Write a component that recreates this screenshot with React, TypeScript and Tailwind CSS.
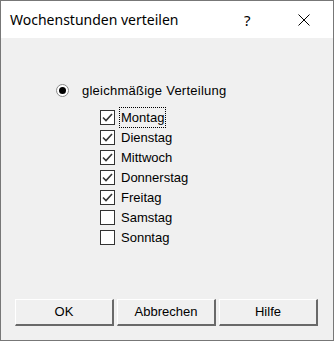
import React from "react";

const days = [
  { label: "Montag", checked: true, focus: true },
  { label: "Dienstag", checked: true },
  { label: "Mittwoch", checked: true },
  { label: "Donnerstag", checked: true },
  { label: "Freitag", checked: true },
  { label: "Samstag", checked: false },
  { label: "Sonntag", checked: false },
];

function CheckBox({ checked }: { checked: boolean }) {
  return (
    <div className="w-[15px] h-[15px] border border-[#333333] bg-white flex items-center justify-center shrink-0">
      {checked && (
        <svg width="13" height="13" viewBox="0 0 13 13">
          <path d="M2 6.5 L5 9.5 L11 3" fill="none" stroke="#333333" strokeWidth="1.6" />
        </svg>
      )}
    </div>
  );
}

function Btn({ children }: { children: React.ReactNode }) {
  return (
    <div className="w-[99px] h-[27px] bg-[#f0f0f0] border-t border-l border-t-white border-l-white border-b-2 border-r-2 border-b-[#696969] border-r-[#696969] flex items-center justify-center text-[13px] text-black">
      {children}
    </div>
  );
}

export default function App() {
  return (
    <div
      className="w-[334px] h-[341px] border border-[#777777] bg-[#f0f0f0] flex flex-col"
      style={{ fontFamily: '"Liberation Sans", Arial, sans-serif' }}
    >
      <div className="h-[37px] bg-white flex items-center shrink-0 relative">
        <div
          className="pl-[9px] text-[14px] text-black"
          style={{ fontFamily: '"Noto Sans", "Open Sans", sans-serif' }}
        >
          Wochenstunden verteilen
        </div>
        <div
          className="absolute left-[243px] top-[8px] text-[15px] text-black"
          style={{ fontFamily: '"Noto Sans", sans-serif' }}
        >
          ?
        </div>
        <svg className="absolute left-[297px] top-[13px]" width="12" height="12" viewBox="0 0 12 12">
          <path d="M0.5 0.5 L11.5 11.5 M11.5 0.5 L0.5 11.5" stroke="#000" strokeWidth="1" />
        </svg>
      </div>
      <div className="flex-1 flex flex-col">
        <div className="pt-[45px] pl-[55px] flex items-center gap-[13px] h-[60px]">
          <div className="w-[13px] h-[13px] rounded-full border border-[#8a8a8a] bg-white flex items-center justify-center">
            <div className="w-[7px] h-[7px] rounded-full bg-black" />
          </div>
          <span className="text-[13px] text-black tracking-[0.25px]">gleichmäßige Verteilung</span>
        </div>
        <div className="pl-[99px] pt-[9px] flex flex-col">
          {days.map((d) => (
            <div key={d.label} className="h-[20px] flex items-center gap-[5px]">
              <CheckBox checked={d.checked} />
              <span
                className={
                  "text-[13px] text-black px-[1px] leading-[19px] " +
                  (d.focus ? "outline-1 outline-dotted outline-black" : "")
                }
              >
                {d.label}
              </span>
            </div>
          ))}
        </div>
        <div className="mt-auto mb-[14px] pl-[14px] flex gap-[3px]">
          <Btn>OK</Btn>
          <Btn>Abbrechen</Btn>
          <Btn>Hilfe</Btn>
        </div>
      </div>
    </div>
  );
}
